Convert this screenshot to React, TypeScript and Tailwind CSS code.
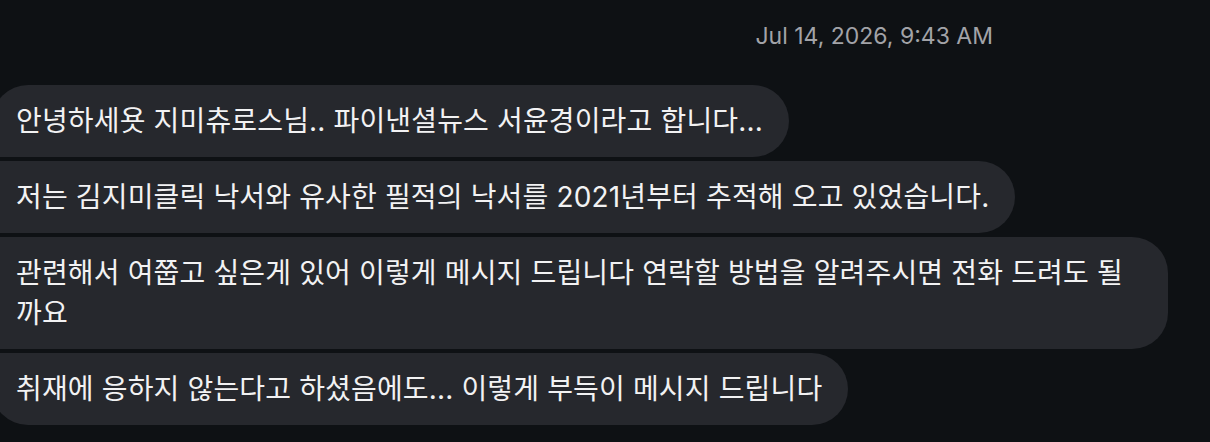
import React from "react";

const messages: { text: string; corner: string }[] = [
  { text: "안녕하세욧 지미츄로스님.. 파이낸셜뉴스 서윤경이라고 합니다...", corner: "rounded-tl-[36px] rounded-bl-[6px]" },
  { text: "저는 김지미클릭 낙서와 유사한 필적의 낙서를 2021년부터 추적해 오고 있었습니다.", corner: "rounded-l-[6px]" },
  { text: "관련해서 여쭙고 싶은게 있어 이렇게 메시지 드립니다 연락할 방법을 알려주시면 전화 드려도 될 까요", corner: "rounded-l-[6px]" },
  { text: "취재에 응하지 않는다고 하셨음에도... 이렇게 부득이 메시지 드립니다", corner: "rounded-tl-[6px] rounded-bl-[36px]" },
];

export default function App() {
  return (
    <div className="h-[442px] w-[1210px] overflow-hidden bg-[#0e1114] font-['Inter','Noto_Sans_CJK_KR',sans-serif]">
      <div className="flex justify-end pr-[217px] pt-[22px] mb-[35px]">
        <span className="text-[23px] leading-[28px] text-[#a2a3a8]">Jul 14, 2026, 9:43 AM</span>
      </div>
      <div className="flex flex-col items-start gap-[4px]">
        {messages.map((m, i) => (
          <div
            key={i}
            className={`-ml-2 max-w-[1176px] bg-[#26282d] rounded-r-[36px] ${m.corner} pl-6 pr-[26px] py-[16px] text-[28px] leading-[40px] tracking-[0.15px] text-[#f2f2f3]`}
          >
            {m.text}
          </div>
        ))}
      </div>
    </div>
  );
}
